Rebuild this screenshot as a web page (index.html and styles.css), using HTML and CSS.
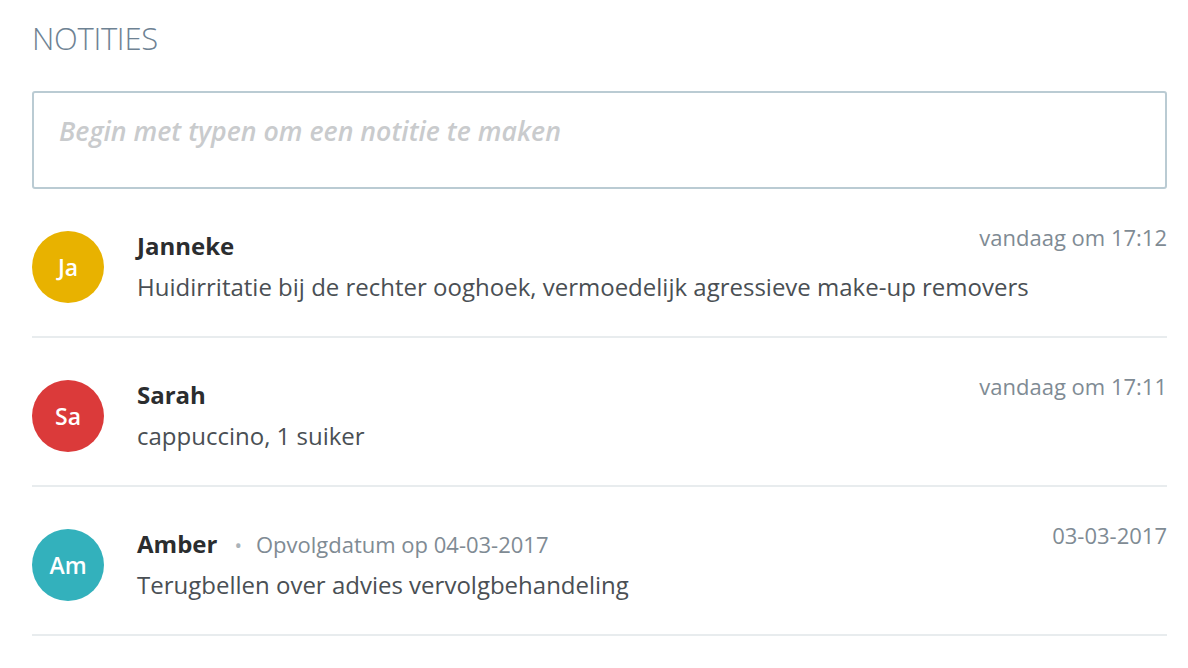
FILE: index.html
```html
<!DOCTYPE html>
<html lang="nl">
<head>
    <meta charset="UTF-8">
    <meta name="viewport" content="width=device-width, initial-scale=1.0">
    <title>Notities</title>
    <link rel="stylesheet" href="styles.css">
</head>
<body>
    <div class="notes">
        <h1 class="notes-title">NOTITIES</h1>

        <div class="note-input">
            <textarea placeholder="Begin met typen om een notitie te maken"></textarea>
        </div>

        <ul class="note-list">
            <li class="note">
                <div class="avatar avatar-yellow">Ja</div>
                <div class="note-body">
                    <div class="note-head">
                        <span class="note-author">Janneke</span>
                        <span class="note-time">vandaag om 17:12</span>
                    </div>
                    <p class="note-text">Huidirritatie bij de rechter ooghoek, vermoedelijk agressieve make-up removers</p>
                </div>
            </li>
            <li class="note">
                <div class="avatar avatar-red">Sa</div>
                <div class="note-body">
                    <div class="note-head">
                        <span class="note-author">Sarah</span>
                        <span class="note-time">vandaag om 17:11</span>
                    </div>
                    <p class="note-text">cappuccino, 1 suiker</p>
                </div>
            </li>
            <li class="note">
                <div class="avatar avatar-teal">Am</div>
                <div class="note-body">
                    <div class="note-head">
                        <span class="note-author">Amber</span>
                        <span class="note-dot">&bull;</span>
                        <span class="note-meta">Opvolgdatum op 04-03-2017</span>
                        <span class="note-time">03-03-2017</span>
                    </div>
                    <p class="note-text">Terugbellen over advies vervolgbehandeling</p>
                </div>
            </li>
        </ul>
    </div>
</body>
</html>
```

FILE: styles.css
```css
body {
    margin: 0;
    background-color: #fff;
    font-family: "Open Sans", "Noto Sans", Arial, sans-serif;
    color: #4a4f54;
}

.notes {
    padding: 0 21px 0 32px;
}

.notes-title {
    margin: 0;
    padding-top: 18px;
    font-size: 31px;
    font-weight: 300;
    line-height: 40px;
    color: #6e8293;
    letter-spacing: -0.3px;
}

.note-input {
    margin-top: 33px;
}

.note-input textarea {
    display: block;
    width: 100%;
    height: 98px;
    box-sizing: border-box;
    padding: 20px 25px 0;
    border: 2px solid #bacbd3;
    border-radius: 3px;
    font-family: inherit;
    font-size: 26.7px;
    font-style: italic;
    font-weight: 600;
    line-height: 36px;
    resize: none;
    outline: none;
}

.note-input textarea::placeholder {
    color: #c9cbcd;
}

.note-list {
    list-style: none;
    margin: 0;
    padding: 0;
}

.note {
    display: flex;
    align-items: flex-start;
    padding: 42px 0 33px;
    border-bottom: 2px solid #e8ecee;
}

.avatar {
    flex-shrink: 0;
    width: 72px;
    height: 72px;
    border-radius: 50%;
    display: flex;
    align-items: center;
    justify-content: center;
    color: #fff;
    font-size: 23px;
    font-weight: 600;
}

.avatar-yellow {
    background-color: #e8b200;
}

.avatar-red {
    background-color: #db3a3a;
}

.avatar-teal {
    background-color: #33b1bc;
}

.note-body {
    flex-grow: 1;
    margin-left: 33px;
}

.note-head {
    display: flex;
    align-items: baseline;
    height: 30px;
    margin-top: -2px;
}

.note-author {
    font-size: 24px;
    font-weight: 700;
    color: #2b2d2f;
}

.note-dot {
    margin: 0 14px 0 17px;
    font-size: 20px;
    color: #aab3b9;
}

.note-meta {
    font-size: 22px;
    color: #7f8b94;
}

.note-time {
    margin-left: auto;
    font-size: 22px;
    color: #7f8b94;
    position: relative;
    top: -9px;
}

.note-text {
    margin: 12px 0 0;
    font-size: 24px;
    line-height: 32px;
    color: #4a4f54;
}
```
